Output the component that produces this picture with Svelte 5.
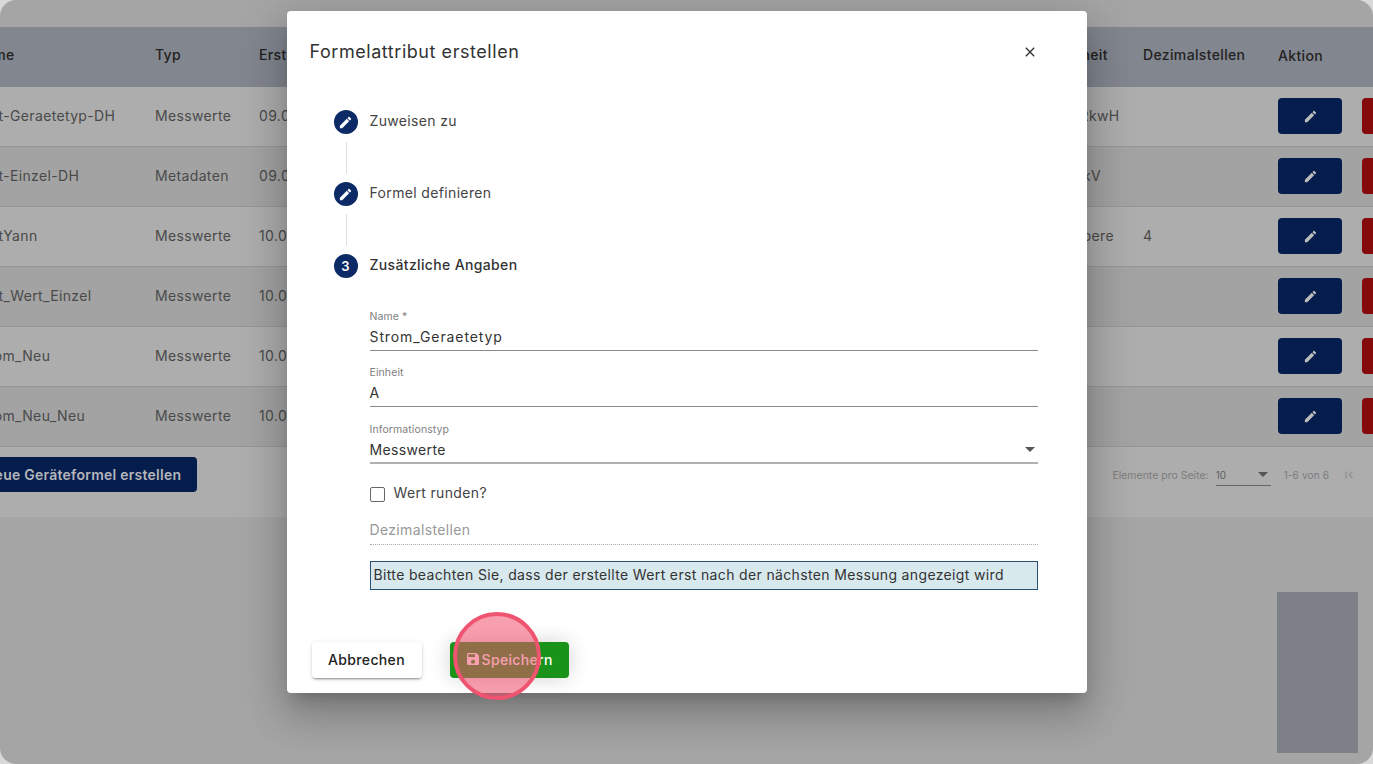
<script>
  const rows = [
    { name: 'Test-Geraetetyp-DH', typ: 'Messwerte', datum: '09.04.2024', einheit: 'EURkwH', dez: '' },
    { name: 'Test-Einzel-DH', typ: 'Metadaten', datum: '09.04.2024', einheit: 'MVkV', dez: '' },
    { name: 'TestYann', typ: 'Messwerte', datum: '10.04.2024', einheit: 'Ampere', dez: '4' },
    { name: 'Test_Wert_Einzel', typ: 'Messwerte', datum: '10.04.2024', einheit: '', dez: '' },
    { name: 'Strom_Neu', typ: 'Messwerte', datum: '10.04.2024', einheit: '', dez: '' },
    { name: 'Strom_Neu_Neu', typ: 'Messwerte', datum: '10.04.2024', einheit: '', dez: '' },
  ];

  const editIcon = 'M3 17.25V21h3.75L17.81 9.94l-3.75-3.75L3 17.25zM20.71 7.04c.39-.39.39-1.02 0-1.41l-2.34-2.34c-.39-.39-1.02-.39-1.41 0l-1.83 1.83 3.75 3.75 1.83-1.83z';
</script>

<div class="frame">
  <div class="page">
    <section class="card">
      <div class="table">
        <div class="row head">
          <div class="c-name">Name</div>
          <div class="c-typ">Typ</div>
          <div class="c-date">Erstellt am</div>
          <div class="c-unit">Einheit</div>
          <div class="c-dez">Dezimalstellen</div>
          <div class="c-act">Aktion</div>
        </div>
        {#each rows as r}
          <div class="row">
            <div class="c-name">{r.name}</div>
            <div class="c-typ">{r.typ}</div>
            <div class="c-date">{r.datum}</div>
            <div class="c-unit">{r.einheit}</div>
            <div class="c-dez">{r.dez}</div>
            <div class="c-act">
              <button class="btn-edit" aria-label="Bearbeiten">
                <svg viewBox="0 0 24 24" width="15" height="15"><path d={editIcon} fill="#bdbdbd" /></svg>
              </button>
              <button class="btn-del" aria-label="Löschen"></button>
            </div>
          </div>
        {/each}
      </div>

      <div class="card-foot">
        <button class="btn-new">Neue Geräteformel erstellen</button>
        <div class="paginator">
          <span class="per-page">Elemente pro Seite:</span>
          <div class="page-size"><span>10</span><i class="caret"></i></div>
          <span class="range">1-6 von 6</span>
          <svg viewBox="0 0 24 24" width="14" height="14"><path d="M18.41 16.59 13.82 12l4.59-4.59L17 6l-6 6 6 6zM6 6h2v12H6z" fill="#8c8c8c" /></svg>
        </div>
      </div>
    </section>
  </div>

  <div class="redacted"></div>

  <div class="overlay">
    <div class="modal">
      <header class="modal-head">
        <h2>Formelattribut erstellen</h2>
        <button class="close" aria-label="Schließen">
          <svg viewBox="0 0 24 24" width="16" height="16"><path d="M19 6.41 17.59 5 12 10.59 6.41 5 5 6.41 10.59 12 5 17.59 6.41 19 12 13.41 17.59 19 19 17.59 13.41 12z" fill="#333" /></svg>
        </button>
      </header>

      <div class="stepper">
        <div class="step">
          <span class="dot"><svg viewBox="0 0 24 24" width="15" height="15"><path d={editIcon} fill="#fff" /></svg></span>
          <span class="step-text">Zuweisen zu</span>
        </div>
        <div class="line"></div>
        <div class="step">
          <span class="dot"><svg viewBox="0 0 24 24" width="15" height="15"><path d={editIcon} fill="#fff" /></svg></span>
          <span class="step-text">Formel definieren</span>
        </div>
        <div class="line"></div>
        <div class="step active">
          <span class="dot">3</span>
          <span class="step-text">Zusätzliche Angaben</span>
        </div>
      </div>

      <form class="form">
        <div class="field">
          <span class="label">Name *</span>
          <span class="value wide">Strom_Geraetetyp</span>
        </div>
        <div class="field second">
          <span class="label">Einheit</span>
          <span class="value">A</span>
        </div>
        <div class="field select">
          <span class="label">Informationstyp</span>
          <span class="value">Messwerte</span>
          <i class="caret"></i>
        </div>
        <label class="check"><span class="box"></span>Wert runden?</label>
        <div class="disabled">Dezimalstellen</div>
        <div class="notice">Bitte beachten Sie, dass der erstellte Wert erst nach der nächsten Messung angezeigt wird</div>
      </form>

      <footer class="actions">
        <button type="button" class="btn-cancel">Abbrechen</button>
        <button type="button" class="btn-save">
          <svg viewBox="0 0 24 24" width="16" height="16"><path d="M17 3H5c-1.11 0-2 .9-2 2v14c0 1.1.89 2 2 2h14c1.1 0 2-.9 2-2V7l-4-4zm-5 16c-1.66 0-3-1.34-3-3s1.34-3 3-3 3 1.34 3 3-1.34 3-3 3zm3-10H5V5h10v4z" fill="#fff" /></svg>
          Speichern
        </button>
        <span class="marker"></span>
      </footer>
    </div>
  </div>
</div>

<style>
  :global(body) {
    background: #d8d8d8;
  }

  * {
    box-sizing: border-box;
  }

  .frame {
    position: relative;
    height: 764px;
    overflow: hidden;
    border-radius: 16px;
    background: #a5a5a5;
    font-family: Inter, "Noto Sans", sans-serif;
    font-size: 14px;
    letter-spacing: 0.35px;
    color: #4a4a4a;
  }

  .page {
    padding-top: 27px;
  }

  .card {
    height: 490px;
    background: #adadad;
    overflow: hidden;
  }

  .table {
    margin-left: -26px;
  }

  .row {
    display: grid;
    grid-template-columns: 181px 104px 801px 83px 135px 1fr;
    align-items: center;
    height: 60px;
    padding-bottom: 1px;
    border-bottom: 1px solid #969696;
    background: #adadad;
  }

  .row > div:not(.c-act) {
    padding-bottom: 2px;
  }

  .row:nth-child(odd) {
    background: #a3a3a3;
  }

  .row.head {
    padding-bottom: 3px;
    background: #82868f;
    border-bottom: none;
    font-weight: 500;
    color: #222;
  }

  .c-act {
    display: flex;
    gap: 20px;
    white-space: nowrap;
  }

  .btn-edit,
  .btn-del {
    flex: none;
    width: 64px;
    height: 36px;
    border: none;
    border-radius: 4px;
    display: flex;
    align-items: center;
    justify-content: center;
  }

  .btn-edit {
    background: #051d4d;
  }

  .btn-del {
    background: #850a0a;
  }

  .card-foot {
    display: flex;
    justify-content: space-between;
    padding-top: 10px;
  }

  .btn-new {
    margin-left: -32px;
    width: 229px;
    height: 35px;
    padding-bottom: 2px;
    border: none;
    border-radius: 4px;
    background: #051d4d;
    color: #b4b6bc;
    font: 600 14px Inter, sans-serif;
    letter-spacing: 0.25px;
    white-space: nowrap;
  }

  .paginator {
    display: flex;
    align-items: center;
    height: 36px;
    padding-right: 17px;
    font-size: 10px;
    letter-spacing: 0;
    color: #7c7c7c;
  }

  .per-page {
    font-size: 10.5px;
  }

  .page-size {
    display: flex;
    align-items: center;
    justify-content: space-between;
    width: 55px;
    height: 22px;
    margin: 0 13px 0 7px;
    padding-right: 3px;
    color: #5c5c5c;
    border-bottom: 1px solid #666;
  }

  .range {
    margin-right: 13px;
    letter-spacing: 0.15px;
  }

  .caret {
    display: block;
    width: 0;
    height: 0;
    border-left: 5px solid transparent;
    border-right: 5px solid transparent;
    border-top: 5px solid #555;
  }

  .redacted {
    position: absolute;
    left: 1277px;
    top: 592px;
    width: 81px;
    height: 161px;
    background: #7e8088;
  }

  .overlay {
    position: absolute;
    inset: 0;
    display: flex;
    justify-content: center;
    padding-top: 11px;
  }

  .modal {
    position: relative;
    width: 800px;
    height: 682px;
    background: #fff;
    border-radius: 4px;
    box-shadow: 0 11px 15px -7px rgba(0, 0, 0, 0.2), 0 24px 38px 3px rgba(0, 0, 0, 0.14), 0 9px 46px 8px rgba(0, 0, 0, 0.12);
  }

  .modal-head {
    display: flex;
    align-items: center;
    justify-content: space-between;
    height: 82px;
    padding: 0 49px 0 23px;
  }

  .modal-head h2 {
    margin: 0 0 1px;
    font-size: 18px;
    font-weight: 400;
    letter-spacing: 0.55px;
    color: #333;
  }

  .close {
    display: flex;
    padding: 0;
    border: none;
    background: none;
  }

  .stepper {
    padding: 17px 0 0 47px;
    color: #444;
  }

  .step {
    display: flex;
    align-items: center;
    gap: 12px;
    height: 24px;
  }

  .step-text {
    padding-bottom: 3px;
  }

  .step.active {
    font-weight: 500;
    color: #333;
  }

  .dot {
    display: flex;
    align-items: center;
    justify-content: center;
    width: 24px;
    height: 24px;
    border-radius: 50%;
    background: #0b2a66;
    color: #fff;
    font-size: 13px;
    font-weight: 600;
    letter-spacing: 0;
  }

  .line {
    width: 1px;
    height: 32px;
    margin: 8px 0 8px 12px;
    background: #dedede;
  }

  .form {
    display: flex;
    flex-direction: column;
    margin: 32px 49px 0 83px;
  }

  .field {
    position: relative;
    display: flex;
    flex-direction: column;
    height: 41px;
    margin-bottom: 15px;
    border-bottom: 1px solid #8a8a8a;
  }

  .field.second {
    margin-bottom: 16px;
  }

  .label {
    font-size: 10.5px;
    line-height: 13px;
    letter-spacing: 0.1px;
    color: #808080;
  }

  .value {
    margin-top: 5px;
    line-height: 18px;
    color: #333;
  }

  .value.wide {
    letter-spacing: 0.9px;
  }

  .select {
    border-bottom: 2px solid #b0b0b0;
  }

  .select .caret {
    position: absolute;
    right: 3px;
    top: 24px;
  }

  .check {
    display: flex;
    align-items: flex-start;
    gap: 9px;
    height: 20px;
    margin-top: 6px;
    line-height: 16px;
    color: #444;
  }

  .box {
    flex: none;
    width: 15px;
    height: 15px;
    margin-top: 2px;
    border: 1px solid #666;
    border-radius: 2px;
  }

  .disabled {
    height: 24px;
    margin-top: 16px;
    line-height: 18px;
    color: #999;
    border-bottom: 1px dotted #aaa;
  }

  .notice {
    height: 29px;
    margin-top: 16px;
    padding-left: 3px;
    line-height: 26px;
    background: #d8e9ee;
    border: 1px solid #2c4f74;
    color: #333;
    white-space: nowrap;
  }

  .actions {
    position: absolute;
    left: 25px;
    top: 631px;
    display: flex;
    gap: 28px;
  }

  .btn-cancel,
  .btn-save {
    height: 36px;
    padding-bottom: 2px;
    border: none;
    border-radius: 4px;
    font: 500 14px Inter, sans-serif;
    letter-spacing: 0.35px;
  }

  .btn-cancel {
    width: 110px;
    background: #fff;
    color: #222;
    box-shadow: 0 3px 1px -2px rgba(0, 0, 0, 0.2), 0 2px 2px rgba(0, 0, 0, 0.14), 0 1px 5px rgba(0, 0, 0, 0.12);
  }

  .btn-save {
    display: flex;
    align-items: center;
    gap: 1px;
    width: 119px;
    padding: 0 0 2px 15px;
    background: #1a931a;
    color: #fff;
    box-shadow: 0 0 20px rgba(0, 0, 0, 0.18);
  }

  .marker {
    position: absolute;
    left: 141px;
    top: -30px;
    width: 88px;
    height: 88px;
    border: 4px solid #ee5470;
    border-radius: 50%;
    background: rgba(243, 80, 110, 0.55);
  }
</style>
